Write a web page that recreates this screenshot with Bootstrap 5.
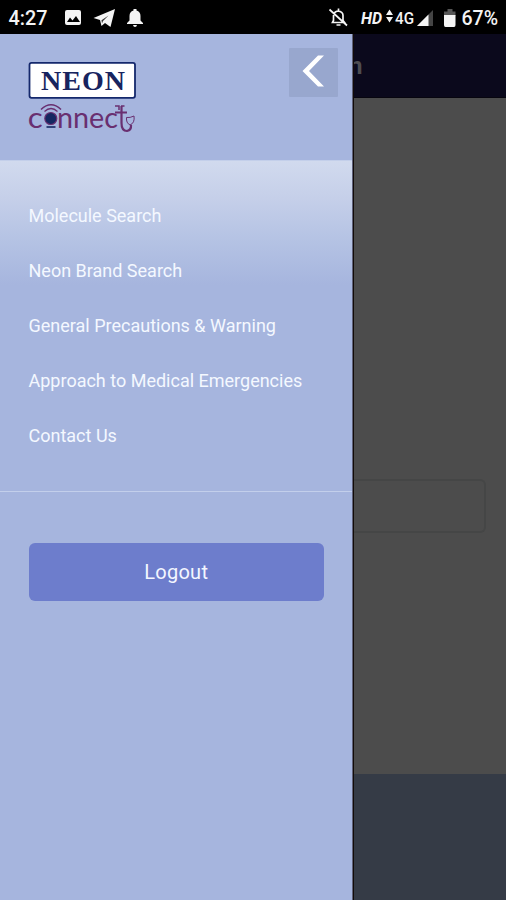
<!DOCTYPE html>
<html lang="en">
<head>
<meta charset="utf-8">
<meta name="viewport" content="width=device-width, initial-scale=1">
<title>Neon Connect</title>
<link href="https://cdn.jsdelivr.net/npm/bootstrap@5.3.0/dist/css/bootstrap.min.css" rel="stylesheet">
<style>
body{font-family:Roboto,"Liberation Sans",sans-serif;background:#4c4c4c}
svg{display:block;flex:none}
.status-bar{height:34px;background:#000;color:#f4f4f4}
.drawer{width:352px;background:#a6b5de;box-shadow:1px 0 0 #5d6079,2px 0 0 #120b08;z-index:1}
.drawer-head{height:126px;padding:14px 14px 0 28px}
.back-btn{width:49px;height:49px;background:#98a7ce;border-radius:1px}
.drawer-menu{height:332px;padding:27px 28px 0 28.500px;border-top:1px solid #c3cfea;border-bottom:1.500px solid #c3cfeb;background:linear-gradient(#d1daee 0,#c5cfe9 38px,#b5c3e4 78px,#a6b5de 124px)}
.menu-link{height:55px;font-size:18px;line-height:55px;color:#f4f8ff;white-space:nowrap}
.logout{height:58px;margin:51px 28px 0 28.500px;font-size:20px;letter-spacing:.25px;color:#f3f6ff;background:#6d7dcc;border-radius:6px}
.top-bar{height:64px;background:#0b091c;color:#4e4d52;font-size:24px;font-weight:700;border-bottom:1px solid #08060f}
.title-text{margin-left:-3px}
.field{height:54px;margin:381px 20px 0 0;border:2px solid #454646;border-left:0;border-radius:0 6px 6px 0}
.foot{height:126px;background:#353b46}
</style>
</head>
<body class="vh-100 d-flex flex-column overflow-hidden">
<header class="status-bar flex-shrink-0">
<svg width="506" height="34" fill="#f4f4f4" font-family="Roboto,sans-serif">
<text x="8.500" y="25" font-size="20" font-weight="500" textLength="39" lengthAdjust="spacingAndGlyphs">4:27</text>
<path fill-rule="evenodd" d="M67 10h12q2 0 2 2v11q0 2-2 2H67q-2 0-2-2V12q0-2 2-2Zm0 12h13l-4-6-3.500 4.500-2.500-3Z"/>
<path d="M93.500 18 115 9 110.500 27l-5.500-4-3.500 3-1.500-6Z"/><path d="m101.500 20.200 7-4.700-5.500 5.500-1 2.500Z" fill="#333"/>
<path d="M127 24v-1l2.500-2.500V16q0-4.500 4-5.500V9h3v1.500q4 1 4 5.500v4.500L143 23v1ZM133 25h4q-.4 2-2 2t-2-2Z"/>
<g fill="none" stroke="#f4f4f4" stroke-width="1.700"><path d="M332.500 22.500h12l-1.500-2v-5q0-4-5-4.500-4 .5-4.500 4.500v5ZM338.500 8.500v2.500M336.500 25h4M329.500 9.500l17.500 16"/></g>
<text x="361" y="23.500" font-size="16" font-weight="700" font-style="italic" textLength="21" lengthAdjust="spacingAndGlyphs">HD</text>
<path d="m386 15 3.500-5.500L393 15ZM386 17h7l-3.500 5.500Z"/>
<text x="395" y="23.500" font-size="17" font-weight="500" textLength="19" lengthAdjust="spacingAndGlyphs">4G</text>
<path d="M417 26 433 10v16Z" fill="#444"/><path d="M417 26 428.500 14.500V26Z"/>
<path d="M444 11.500h3.500V9h5v2.500h3V16H444Z" fill="#555"/><path d="M444 15h11.500v10q0 2-1.500 2h-8.500q-1.500 0-1.500-2Z"/>
<text x="461.500" y="25" font-size="20" font-weight="500" textLength="36.500" lengthAdjust="spacingAndGlyphs">67%</text>
</svg>
</header>
<div class="d-flex flex-grow-1">
<aside class="drawer d-flex flex-column flex-shrink-0">
<div class="drawer-head d-flex justify-content-between align-items-start">
<svg width="110" height="86" viewBox="28 48 110 86" role="img" aria-label="Neon Connect">
<rect x="29.500" y="62.800" width="105.500" height="35" rx="2" fill="#fff" stroke="#14286c" stroke-width="1.800"/>
<text x="41" y="90" font-family="Liberation Serif,serif" font-weight="700" font-size="28" fill="#17245f" textLength="84" lengthAdjust="spacing">NEON</text>
<g font-family="Lato,sans-serif" font-size="28" fill="#692f70">
<text x="27.800" y="128" textLength="15" lengthAdjust="spacingAndGlyphs">c</text>
<text x="57" y="128" textLength="61" lengthAdjust="spacingAndGlyphs">nnec</text></g>
<circle cx="50.800" cy="118.500" r="6" fill="#142761" stroke="#692f70" stroke-width="1.200"/>
<g fill="none" stroke="#692f70"><path d="M41 109.500q10-9.500 20 0" stroke-width="1.600"/><path d="M44.500 111.500q6.500-6 13 0" stroke-width="1.200"/><path d="M46.500 127h9" stroke="#142761" stroke-width="1.600"/><path d="M121.500 106v17q0 8 5.500 8 4.500-1 4-6M115 112.500h12" stroke-width="2.200"/><path d="M115 106h4v4M121 106h3.500" stroke-width="1.500"/><path d="M126.500 117.500q3.500.5 7.500-1.500 1 7-4 9-4-2-3.500-7.500Z" stroke-width="1"/></g>
</svg>
<button class="back-btn btn border-0 p-0" aria-label="Close menu"><svg width="49" height="49"><path d="M29 7.500H35L20 23 35 38.500H29L13.500 23Z" fill="#fff"/></svg></button>
</div>
<nav class="drawer-menu d-flex flex-column flex-shrink-0">
<a class="menu-link text-decoration-none" href="#">Molecule Search</a>
<a class="menu-link text-decoration-none" href="#">Neon Brand Search</a>
<a class="menu-link text-decoration-none" href="#">General Precautions &amp; Warning</a>
<a class="menu-link text-decoration-none" href="#">Approach to Medical Emergencies</a>
<a class="menu-link text-decoration-none" href="#">Contact Us</a>
</nav>
<button class="logout btn border-0 p-0 flex-shrink-0">Logout</button>
</aside>
<main class="flex-grow-1 d-flex flex-column">
<div class="top-bar d-flex align-items-center flex-shrink-0"><span class="title-text lh-1">n</span></div>
<div class="field flex-shrink-0"></div>
<footer class="foot mt-auto"></footer>
</main>
</div>
<script src="https://cdn.jsdelivr.net/npm/bootstrap@5.3.0/dist/js/bootstrap.bundle.min.js"></script>
</body>
</html>
